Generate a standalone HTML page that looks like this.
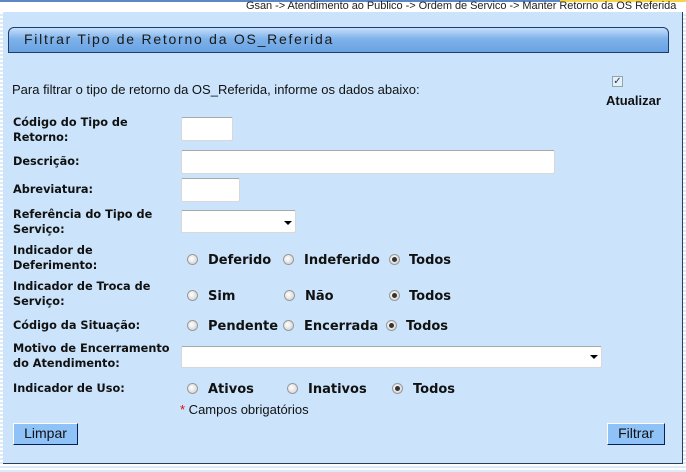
<!DOCTYPE html>
<html><head><meta charset="utf-8"><style>
body{margin:0;width:686px;height:472px;position:relative;overflow:hidden;background:#fff;font-family:"Liberation Sans",Arial,sans-serif;}
.a{position:absolute;}
.stripes{background:repeating-linear-gradient(#fff 0 2px,#dcebf8 2px 4px);}
.lab{font-family:"DejaVu Sans",sans-serif;font-size:11.3px;font-weight:bold;color:#111;line-height:15px;white-space:nowrap;}
.in{position:absolute;background:#fff;border:1px solid #d8d8d8;border-top-color:#a8a8a8;border-radius:2px;box-sizing:border-box;}
.r{position:absolute;width:11px;height:11px;border-radius:50%;background:radial-gradient(circle at 40% 40%,#fff,#ccc);border:1px solid #999;box-sizing:border-box;}
.r.on::after{content:"";position:absolute;left:2px;top:2px;width:5px;height:5px;border-radius:50%;background:#333;}
.rt{position:absolute;font-family:"DejaVu Sans",sans-serif;font-size:13px;font-weight:bold;color:#111;white-space:nowrap;}
.btn{position:absolute;background:#8fc2f7;border:1px solid #fff;border-right-color:#0a1f5a;border-bottom-color:#0a1f5a;font-size:14px;color:#111;text-align:center;box-sizing:border-box;line-height:19px;}
</style></head><body>
<div class="a stripes" style="left:0;top:0;width:686px;height:472px"></div>
<div class="a" style="left:0;top:0;width:686px;height:12px;background:#fff"></div>
<div class="a" style="left:0;top:0;width:686px;height:2px;background:#5d86c9"></div>
<div class="a" style="left:560px;top:0;width:126px;height:2px;background:#f5d34a"></div>
<div class="a" style="left:246px;top:0;font-size:11px;color:#222;line-height:12px;letter-spacing:-0.05px">Gsan -&gt; Atendimento ao Publico -&gt; Ordem de Servico -&gt; Manter Retorno da OS Referida</div>
<div class="a" style="left:3px;top:12px;width:680px;height:452px;background:#cbe4fb;border-right:1px solid #2c3e55;border-bottom:1px solid #2c3e55;box-sizing:border-box"></div>
<div class="a" style="left:8px;top:27px;width:661px;height:26px;background:linear-gradient(#c6e0fb,#7eb2ea 45%,#6aa2e2);border:1px solid #1d3c6a;border-radius:6px 6px 0 0;box-sizing:border-box"></div>
<div class="a" style="left:24px;top:31px;font-size:14px;letter-spacing:1.75px;color:#1a1a1a">Filtrar Tipo de Retorno da OS_Referida</div>
<div class="a" style="left:12px;top:82px;font-size:13px;color:#111">Para filtrar o tipo de retorno da OS_Referida, informe os dados abaixo:</div>
<div class="a" style="left:612px;top:76px;width:11px;height:11px;border:1px solid #8aa;background:#e6eef8;box-sizing:border-box;font-size:10px;line-height:9px;color:#335;text-align:center">✓</div>
<div class="a lab" style="left:606px;top:93px;font-size:13px;font-family:'Liberation Sans',sans-serif">Atualizar</div>
<div class="a lab" style="left:13px;top:115px">Código do Tipo de<br>Retorno:</div>
<div class="in" style="left:181px;top:117px;width:52px;height:24px"></div>
<div class="a lab" style="left:13px;top:154px">Descrição:</div>
<div class="in" style="left:181px;top:150px;width:374px;height:24px"></div>
<div class="a lab" style="left:13px;top:182px">Abreviatura:</div>
<div class="in" style="left:181px;top:178px;width:59px;height:24px"></div>
<div class="a lab" style="left:13px;top:207px">Referência do Tipo de<br>Serviço:</div>
<div class="in" style="left:181px;top:210px;width:115px;height:23px"></div>
<div class="a" style="left:284px;top:221px;border-left:4px solid transparent;border-right:4px solid transparent;border-top:4px solid #000"></div>
<div class="a lab" style="left:13px;top:243px">Indicador de<br>Deferimento:</div>
<div class="r" style="left:187px;top:254px"></div><div class="rt" style="left:208px;top:253px">Deferido</div>
<div class="r" style="left:283px;top:254px"></div><div class="rt" style="left:304px;top:253px">Indeferido</div>
<div class="r on" style="left:389px;top:254px"></div><div class="rt" style="left:409px;top:253px">Todos</div>
<div class="a lab" style="left:13px;top:279px">Indicador de Troca de<br>Serviço:</div>
<div class="r" style="left:187px;top:290px"></div><div class="rt" style="left:208px;top:289px">Sim</div>
<div class="r" style="left:284px;top:290px"></div><div class="rt" style="left:305px;top:289px">Não</div>
<div class="r on" style="left:389px;top:290px"></div><div class="rt" style="left:409px;top:289px">Todos</div>
<div class="a lab" style="left:13px;top:318px">Código da Situação:</div>
<div class="r" style="left:187px;top:320px"></div><div class="rt" style="left:208px;top:319px">Pendente</div>
<div class="r" style="left:283px;top:320px"></div><div class="rt" style="left:304px;top:319px">Encerrada</div>
<div class="r on" style="left:386px;top:320px"></div><div class="rt" style="left:406px;top:319px">Todos</div>
<div class="a lab" style="left:13px;top:341px">Motivo de Encerramento<br>do Atendimento:</div>
<div class="in" style="left:181px;top:346px;width:421px;height:22px"></div>
<div class="a" style="left:590px;top:355px;border-left:4px solid transparent;border-right:4px solid transparent;border-top:4px solid #000"></div>
<div class="a lab" style="left:13px;top:381px">Indicador de Uso:</div>
<div class="r" style="left:187px;top:383px"></div><div class="rt" style="left:208px;top:382px">Ativos</div>
<div class="r" style="left:287px;top:383px"></div><div class="rt" style="left:308px;top:382px">Inativos</div>
<div class="r on" style="left:392px;top:383px"></div><div class="rt" style="left:413px;top:382px">Todos</div>
<div class="a" style="left:180px;top:402px;font-size:13px;color:#111"><span style="color:#e00">*</span> Campos obrigatórios</div>
<div class="btn" style="left:13px;top:423px;width:65px;height:22px">Limpar</div>
<div class="btn" style="left:607px;top:423px;width:58px;height:22px">Filtrar</div>
</body></html>
